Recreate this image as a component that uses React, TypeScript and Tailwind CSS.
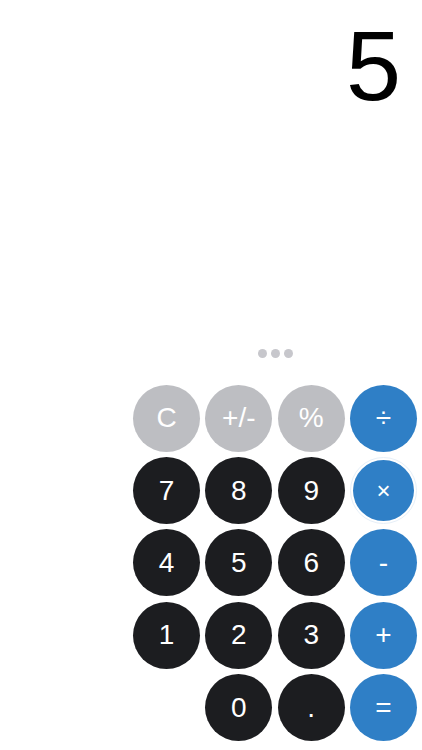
import { useState } from 'react';

type Kind = 'fn' | 'num' | 'op';

interface Key {
  label: string;
  kind: Kind;
  pressed?: boolean;
}

const keys: (Key | null)[] = [
  { label: 'C', kind: 'fn' },
  { label: '+/-', kind: 'fn' },
  { label: '%', kind: 'fn' },
  { label: '÷', kind: 'op' },
  { label: '7', kind: 'num' },
  { label: '8', kind: 'num' },
  { label: '9', kind: 'num' },
  { label: '×', kind: 'op', pressed: true },
  { label: '4', kind: 'num' },
  { label: '5', kind: 'num' },
  { label: '6', kind: 'num' },
  { label: '-', kind: 'op' },
  { label: '1', kind: 'num' },
  { label: '2', kind: 'num' },
  { label: '3', kind: 'num' },
  { label: '+', kind: 'op' },
  null,
  { label: '0', kind: 'num' },
  { label: '.', kind: 'num' },
  { label: '=', kind: 'op' },
];

const kindClass: Record<Kind, string> = {
  fn: 'bg-[#bdbec2]',
  num: 'bg-[#1c1d20]',
  op: 'bg-[#2f7fc6]',
};

function CalcKey({ k }: { k: Key }) {
  if (k.pressed) {
    return (
      <button className="w-[67px] h-[67px] rounded-full border border-[#e6eff8] flex items-center justify-center">
        <span className="w-[61px] h-[61px] rounded-full bg-[#2f7fc6] flex items-center justify-center text-white text-[24px] leading-none">
          {k.label}
        </span>
      </button>
    );
  }
  return (
    <button
      className={`w-[67px] h-[67px] rounded-full flex items-center justify-center text-white text-[28px] leading-none ${kindClass[k.kind]}`}
    >
      {k.label}
    </button>
  );
}

export default function App() {
  const [value] = useState('5');

  return (
    <div className="flex flex-col h-screen bg-white overflow-hidden font-['Liberation_Sans',Arial,sans-serif]">
      {/* Display */}
      <div className="flex justify-end pt-[16px] pr-[21px]">
        <span className="text-[99px] leading-none text-black">{value}</span>
      </div>

      <div className="flex-1" />

      {/* Page dots */}
      <div className="flex justify-end pr-[5px]">
        <div className="w-[284px] flex justify-center gap-[4px]">
          <span className="w-[9px] h-[9px] rounded-full bg-[#c7c7cc]" />
          <span className="w-[9px] h-[9px] rounded-full bg-[#c7c7cc]" />
          <span className="w-[9px] h-[9px] rounded-full bg-[#c7c7cc]" />
        </div>
      </div>

      {/* Keypad */}
      <div className="flex justify-end pr-[5px] pt-[27px] pb-[9px]">
        <div className="grid grid-cols-[repeat(4,67px)] gap-x-[5.33px] gap-y-[5.3px]">
          {keys.map((k, i) => (k ? <CalcKey key={i} k={k} /> : <div key={i} />))}
        </div>
      </div>
    </div>
  );
}
